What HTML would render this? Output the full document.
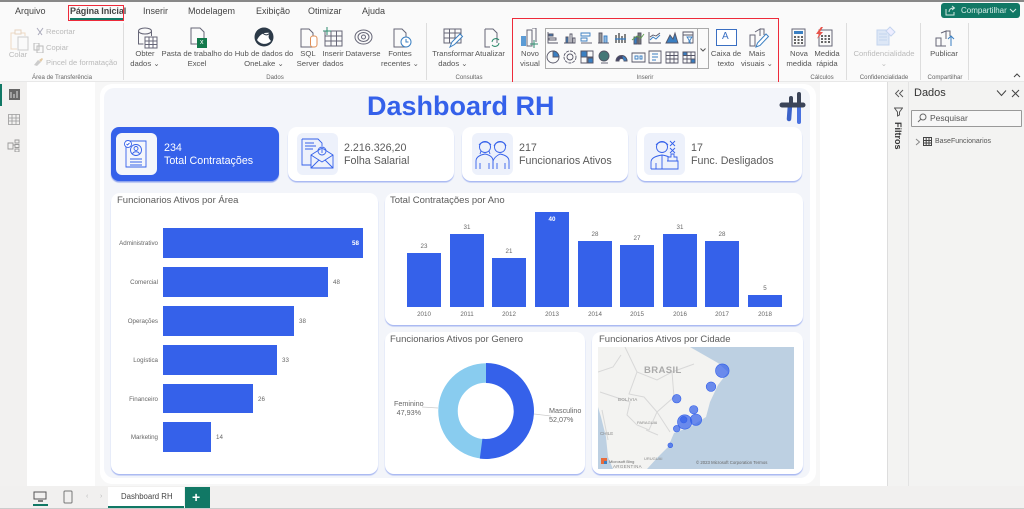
<!DOCTYPE html>
<html lang="pt"><head><meta charset="utf-8"><title>Dashboard RH</title>
<style>
html,body{margin:0;padding:0;background:#fff}
#p{position:relative;width:1024px;height:509px;overflow:hidden;background:#fff;font-family:"Liberation Sans",sans-serif;color:#444;filter:blur(.3px)}
#p div,#p svg{position:absolute}
.t{white-space:nowrap;line-height:1}
.c{text-align:center;transform:translateX(-50%);white-space:nowrap;font-size:7.7px;line-height:10px;color:#555}
.m{font-size:9px;color:#444;top:6px;line-height:11px;white-space:nowrap}
.g{font-size:6.1px;color:#666;text-align:center;transform:translateX(-50%);top:74px;white-space:nowrap;line-height:8px}
.sep{top:23px;width:1px;height:57px;background:#ddd}
.card{background:#fff;border-radius:9px;box-shadow:0 1.5px 1px #a9b9f2}
.ct{font-size:9.5px;color:#5b5b5b;white-space:nowrap;line-height:11px}
.b{background:#3561ea}
.kt{font-size:10.7px;line-height:13px;color:#5a5a5a;white-space:nowrap}
.tile{background:#edf1fb;border-radius:6px;width:41px;height:42px;top:133px}
.l{font-size:6.2px;color:#666;line-height:7px;white-space:nowrap}
.lr{text-align:right}
.lc{text-align:center;transform:translateX(-50%)}
svg.i{fill:none;stroke:#667;stroke-width:1}
</style></head><body><div id="p">

<!-- ribbon -->
<div style="left:0;top:0;width:1024px;height:82px;background:#fafafa"></div>
<div style="left:0;top:0;width:1024px;height:1.5px;background:#888"></div>
<div style="left:0;top:81px;width:1024px;height:1px;background:#e8e8e8"></div>
<div class="m" style="left:15px">Arquivo</div>
<div class="m" style="left:70px;font-weight:bold;color:#444;letter-spacing:-.1px">Página Inicial</div>
<div style="left:70px;top:18px;width:53px;height:1.5px;background:#117865"></div>
<div style="left:68px;top:5px;width:54px;height:14px;border:1.5px solid #ee2b3a"></div>
<div class="m" style="left:143px">Inserir</div>
<div class="m" style="left:188px">Modelagem</div>
<div class="m" style="left:256px">Exibição</div>
<div class="m" style="left:308px">Otimizar</div>
<div class="m" style="left:362px">Ajuda</div>

<div style="left:941px;top:3px;width:79px;height:15px;background:#117865;border-radius:3px"></div>
<svg style="left:945px;top:5px" width="11" height="11" viewBox="0 0 11 11" fill="none" stroke="#cfe6e0" stroke-width="1"><path d="M1 4v6h8V7M4 7c0-3 2-4 5-4M7 1l2.5 2L7 5"/></svg>
<div class="t" style="left:961px;top:7px;font-size:8px;color:#d8ece7">Compartilhar</div>
<svg style="left:1009px;top:8px" width="8" height="6" viewBox="0 0 8 6" fill="none" stroke="#d8ece7"><path d="M1 1l3 3 3-3"/></svg>

<!-- clipboard -->
<svg style="left:10px;top:28px" width="20" height="24" viewBox="0 0 20 24" fill="none" stroke-width="1"><path d="M5 5H1v16h6M11 5h4v3" stroke="#eed9c4"/><path d="M5 2h6v4H5z" stroke="#e5d3bf"/><rect x="8" y="9" width="10" height="13" stroke="#ccc"/></svg>
<div class="c" style="left:18px;top:50px;color:#bbb">Colar</div>
<svg style="left:35px;top:27px" width="10" height="10" viewBox="0 0 10 10" fill="none" stroke="#aab"><path d="M2 1l5 7M8 1L3 8"/></svg>
<div class="t" style="left:46px;top:28px;font-size:7.6px;color:#bbb">Recortar</div>
<svg style="left:33px;top:43px" width="11" height="10" viewBox="0 0 11 10" fill="none" stroke="#bbb"><path d="M1 0h5v7H1zM4 3h6v7H4z"/></svg>
<div class="t" style="left:46px;top:44px;font-size:7.6px;color:#bbb">Copiar</div>
<svg style="left:33px;top:57px" width="11" height="10" viewBox="0 0 11 10"><path d="M1 8l4-5 3 2-4 4z" fill="#ccc"/><path d="M6 3l3-2 1 1-2 3z" fill="#e3c9a3"/></svg>
<div class="t" style="left:46px;top:59px;font-size:7.6px;color:#bbb">Pincel de formatação</div>
<div class="g" style="left:62px">Área de Transferência</div>
<div class="sep" style="left:123px"></div>

<!-- dados -->
<svg class="i" style="left:137px;top:27px" width="21" height="22" viewBox="0 0 21 22"><ellipse cx="8" cy="4" rx="6.5" ry="3"/><path d="M1.5 4v13h5"/><path d="M14.5 4v5"/><rect x="8" y="10" width="12" height="11" fill="#fff"/><path d="M8 14h12M8 17.5h12M12 10v11M16 10v11"/></svg>
<div class="c" style="left:145px;top:49px">Obter<br>dados ⌄</div>
<svg class="i" style="left:189px;top:27px" width="20" height="22" viewBox="0 0 20 22"><path d="M2 1h9l4 4v12H2z"/><rect x="8" y="11" width="10" height="10" fill="#137a4c" stroke="none"/></svg>
<div class="t" style="left:200px;top:39px;font-size:7px;color:#fff">x</div>
<div class="c" style="left:197px;top:49px">Pasta de trabalho do<br>Excel</div>
<svg style="left:254px;top:27px" width="20" height="20" viewBox="0 0 20 20"><circle cx="10" cy="10" r="9.5" fill="#2c3a48"/><path d="M3 13c3-6 7-8 13-7-2 3-2 5 1 8-4 4-10 4-14-1z" fill="#fff"/><path d="M8 5c2 3 5 4 8 1" fill="none" stroke="#2c3a48"/></svg>
<div class="c" style="left:264px;top:49px">Hub de dados do<br>OneLake ⌄</div>
<svg class="i" style="left:300px;top:28px" width="18" height="20" viewBox="0 0 18 20"><path d="M1 1h8l4 4v14H1z"/><rect x="10.5" y="8" width="6.5" height="11" rx="2.5" fill="#fff" stroke="#e08e55"/></svg>
<div class="c" style="left:308px;top:49px">SQL<br>Server</div>
<svg class="i" style="left:323px;top:27px" width="20" height="20" viewBox="0 0 20 20"><path d="M2 4h17v15H2zM2 9h17M2 14h17M8 4v15M13.5 4v15"/><path d="M4 0v8M0 4h8" stroke="#2e8b6d"/></svg>
<div class="c" style="left:333px;top:49px">Inserir<br>dados</div>
<svg class="i" style="left:354px;top:29px" width="19" height="16" viewBox="0 0 19 16"><ellipse cx="9.5" cy="8" rx="8.5" ry="7"/><ellipse cx="9.5" cy="8" rx="5.5" ry="4.5"/><circle cx="9.5" cy="8" r="2"/></svg>
<div class="c" style="left:363px;top:49px">Dataverse</div>
<svg class="i" style="left:392px;top:28px" width="20" height="21" viewBox="0 0 20 21"><path d="M2 1h8l4 4v14H2z"/><circle cx="14" cy="14" r="5" fill="#fff" stroke="#3a7fc2"/><path d="M14 11v3h2.5" stroke="#3a7fc2"/></svg>
<div class="c" style="left:400px;top:49px">Fontes<br>recentes ⌄</div>
<div class="g" style="left:275px">Dados</div>
<div class="sep" style="left:426px"></div>

<!-- consultas -->
<svg class="i" style="left:443px;top:28px" width="21" height="20" viewBox="0 0 21 20"><path d="M1 1h17v14H1zM1 5h17M1 10h17M6.5 1v14M12 1v14"/><path d="M7 19l2-5 8-8 2.5 2.5-8 8z" fill="#fff" stroke="#3a7fc2"/></svg>
<div class="c" style="left:453px;top:49px">Transformar<br>dados ⌄</div>
<svg class="i" style="left:483px;top:28px" width="18" height="20" viewBox="0 0 18 20"><path d="M2 1h8l4 4v10M2 1v18h5"/><path d="M9 14a4 4 0 0 1 7-2M16 15a4 4 0 0 1-7 2" stroke="#2e8b6d"/></svg>
<div class="c" style="left:490px;top:49px">Atualizar</div>
<div class="g" style="left:469px">Consultas</div>

<!-- inserir -->
<div style="left:511.5px;top:17.5px;width:265px;height:63px;border:1.5px solid #ee2b3a"></div>
<svg class="i" style="left:520px;top:28px" width="20" height="20" viewBox="0 0 20 20"><rect x="1" y="8" width="5" height="10" fill="#5b9bd5" stroke="none"/><path d="M7 2h5v16H7zM12 0h4v14"/><path d="M14 12v8M10 16h8" stroke="#2e8b6d"/></svg>
<div class="c" style="left:530px;top:49px">Novo<br>visual</div>
<div style="left:545px;top:28px;width:162px;height:39px;border:1px solid #aaa;background:#fafafa"></div>
<div style="left:697px;top:28px;width:1px;height:40px;background:#aaa"></div>
<svg style="left:699px;top:47px" width="8" height="6" viewBox="0 0 8 6" fill="none" stroke="#555"><path d="M1.5 1.5L4 4l2.5-2.5"/></svg>
<svg style="left:546px;top:31px" width="151" height="34" viewBox="0 0 151 34" fill="none" stroke="#556" stroke-width=".9">
<g><path d="M2 1v11h10M3 3h4v2H3zM3 7h7v2H3z"/><path d="M3 3h4v2H3z" fill="#3a7fc2"/></g>
<g transform="translate(17)"><path d="M1 12h11M3 6h2v6H3zM7 3h2v9H7zM10 7h2v5h-2z"/><path d="M3 6h2v6H3z" fill="#3a7fc2"/></g>
<g transform="translate(34)"><path d="M1 2h9v3H1zM1 7h6v3H1z" stroke="#3a7fc2"/><path d="M1 12h11"/></g>
<g transform="translate(51)"><path d="M2 2h3v10H2z" fill="#999"/><path d="M7 5h3v7H7z" stroke="#3a7fc2" fill="#8fb8e0"/><path d="M1 12h11"/></g>
<g transform="translate(68)" stroke-width="1.3"><path d="M2 4v8M5 2v10M8 5v7M11 3v9" stroke="#444"/><path d="M1 8h11" stroke="#3a7fc2"/></g>
<g transform="translate(85)"><path d="M3 6h3v7H3z" fill="#3a7fc2"/><path d="M7 2h3v11H7z" fill="#777"/><path d="M1 9l5-4 4 2 3-4" stroke="#5fa04e"/></g>
<g transform="translate(102)"><path d="M1 1v11h12"/><path d="M2 9l3-3 3 2 4-4" stroke="#3a7fc2"/><path d="M2 6l3-2 3 1 4-3"/></g>
<g transform="translate(119)"><path d="M1 12l4-8 3 4 2-6 3 10z" fill="#3a7fc2"/></g>
<g transform="translate(136)"><path d="M1 1h10v11H1zM1 4h10"/><path d="M5 6h5l-2 3v3l-1-1V9z" stroke="#3a7fc2"/></g>
<g transform="translate(0,19)"><circle cx="7" cy="7" r="6"/><path d="M7 1a6 6 0 0 1 6 6H7z" fill="#3a7fc2"/></g>
<g transform="translate(17,19)"><circle cx="7" cy="7" r="6" stroke-dasharray="3 1"/><circle cx="7" cy="7" r="3"/></g>
<g transform="translate(34,19)"><path d="M1 1h12v12H1z"/><path d="M1 1h6v6H1zM8 8h5v5H8z" fill="#3a7fc2"/><path d="M1 7h12M7 1v12"/></g>
<g transform="translate(51,19)"><circle cx="7" cy="6" r="5" fill="#477"/><path d="M4 13h7"/></g>
<g transform="translate(68,19)"><path d="M2 11a5.5 5.5 0 0 1 11 0h-3a2.5 2.5 0 0 0-5 0z" fill="#446"/><path d="M8 5.5a5.5 5.5 0 0 1 5 5.5h-3" fill="#3a7fc2"/></g>
<g transform="translate(85,19)"><path d="M1 3h13v9H1z"/><path d="M4 6h3v3H4zM9 6h2v3H9z" stroke="#3a7fc2"/></g>
<g transform="translate(102,19)"><path d="M1 1h12v12H1z"/><path d="M4 4h6M4 7h6M4 10h4" stroke="#3a7fc2"/></g>
<g transform="translate(119,19)"><path d="M1 2h12v11H1zM1 5.5h12M1 9h12M5 2v11M9 2v11"/></g>
<g transform="translate(136,19)"><path d="M1 2h12v11H1z"/><path d="M1 5.5h12M1 9h12M5 2v11M9 2v11"/><path d="M9 9h4v4H9zM1 2h4v3.5H1z" fill="#3a7fc2"/></g>
</svg>
<div style="left:716px;top:29px;width:19px;height:15px;border:1px solid #3a6fc2;background:#fff"></div>
<div class="t" style="left:722px;top:32px;font-size:10px;color:#3a6fc2">A</div>
<div class="c" style="left:726px;top:49px">Caixa de<br>texto</div>
<svg class="i" style="left:749px;top:27px" width="21" height="21" viewBox="0 0 21 21"><path d="M1 8h5v11H1zM6 5l5-3v7M11 2h4v6"/><path d="M7 20l1.5-4L17 7l2.5 2.5-8.500 9z" fill="#fff" stroke="#3a7fc2"/></svg>
<div class="c" style="left:757px;top:49px">Mais<br>visuais ⌄</div>
<div class="g" style="left:645px">Inserir</div>

<!-- calculos -->
<svg class="i" style="left:791px;top:28px" width="15" height="19" viewBox="0 0 15 19"><rect x="1" y="1" width="13" height="17"/><rect x="3" y="3" width="9" height="3" fill="#3a7fc2" stroke="none"/><path d="M3 9h2M6.5 9h2M10 9h2M3 12h2M6.5 12h2M10 12h2M3 15h2M6.5 15h2M10 15h2" stroke="#333" stroke-width="1.5"/></svg>
<div class="c" style="left:799px;top:49px">Nova<br>medida</div>
<svg class="i" style="left:815px;top:27px" width="18" height="20" viewBox="0 0 18 20"><rect x="4" y="3" width="13" height="16"/><path d="M6 9h2M9.5 9h2M13 9h2M6 12h2M9.5 12h2M13 12h2M6 15h2M9.5 15h2M13 15h2" stroke="#333" stroke-width="1.5"/><path d="M6 0L1 7h3l-2 5 6-7H5l3-5z" fill="#e8534a" stroke="none"/></svg>
<div class="c" style="left:827px;top:49px">Medida<br>rápida</div>
<div class="g" style="left:822px">Cálculos</div>
<div class="sep" style="left:846px"></div>

<svg style="left:876px;top:26px" width="20" height="21" viewBox="0 0 20 21" fill="none" stroke="#c4d4ee"><path d="M1 4h12v15H1z" fill="#dde7f6"/><path d="M3 8h8M3 11h8M3 14h8"/><path d="M10 5l4-4 5 5-4 4z" fill="#eef"/></svg>
<div class="c" style="left:884px;top:49px;color:#bbb">Confidencialidade<br>⌄</div>
<div class="g" style="left:884px">Confidencialidade</div>
<div class="sep" style="left:920px"></div>

<svg class="i" style="left:935px;top:27px" width="21" height="20" viewBox="0 0 21 20"><path d="M1 11h5v8H1zM6 6l5-2v8M6 19h5M11 4h4v5"/><path d="M16 19V9M13 12l3-3 3 3" stroke="#3a7fc2"/></svg>
<div class="c" style="left:944px;top:49px">Publicar</div>
<div class="g" style="left:945px">Compartilhar</div>
<div class="sep" style="left:968px"></div>
<svg style="left:1013px;top:73px" width="8" height="6" viewBox="0 0 8 6" fill="none" stroke="#444"><path d="M1 4l3-3 3 3"/></svg>

<!-- left rail -->
<div style="left:0;top:82px;width:27px;height:404px;background:#f2f1f0"></div>
<div style="left:0;top:84px;width:2px;height:22px;background:#117865"></div>
<svg style="left:9px;top:89px" width="11" height="11" viewBox="0 0 11 11"><rect width="11" height="11" fill="#666"/><path d="M2 3v6M5 5v4M8 2v7" stroke="#ddd"/></svg>
<svg style="left:8px;top:114px" width="12" height="11" viewBox="0 0 12 11" fill="none" stroke="#999" stroke-width=".8"><path d="M.5.5h11v10H.5zM.5 4h11M.5 7h11M4 .5v10M8 .5v10"/></svg>
<svg style="left:7px;top:139px" width="13" height="13" viewBox="0 0 13 13" fill="none" stroke="#999" stroke-width=".9"><path d="M1 4h5v6H1zM8 1h4v3H8zM8 5.5h4v3H8zM8 10h4v3H8zM6 6h2"/></svg>

<!-- canvas gutter -->
<div style="left:95px;top:82px;width:725px;height:404px;background:#f7f7f7"></div>
<div style="left:100px;top:84px;width:716px;height:400px;background:#fff;border-radius:12px"></div>
<div style="left:104px;top:88px;width:706px;height:390px;background:#f3f5fa;border-radius:10px"></div>

<div class="t" style="left:367px;top:93px;font-size:27px;font-weight:bold;color:#3561ea">Dashboard RH</div>
<!-- logo -->
<svg style="left:778px;top:91px" width="28" height="34" viewBox="0 0 28 34"><path d="M12 14L11 28" stroke="#3b62c8" stroke-width="4.5" stroke-linecap="round"/><path d="M21 14v17" stroke="#4a72e0" stroke-width="4" stroke-linecap="round"/><path d="M4 14h21" stroke="#3b4458" stroke-width="5" stroke-linecap="round"/><path d="M13 14V7M21 14V3" stroke="#3b4458" stroke-width="4" stroke-linecap="round"/></svg>

<!-- KPI -->
<div class="b" style="left:111px;top:127px;width:168px;height:54px;border-radius:8px;box-shadow:0 1.5px 1px #8ea3ee"></div>
<div class="tile" style="left:116px;background:#f4f6fb"></div>
<svg style="left:123px;top:139px" width="27" height="30" viewBox="0 0 27 30" fill="none" stroke="#3561ea" stroke-width=".9"><path d="M3 2h20v26H3z"/><circle cx="13" cy="11" r="5.5"/><circle cx="13" cy="9.5" r="2"/><path d="M9.5 15c1-3 6-3 7 0"/><circle cx="5" cy="5" r="3.5" fill="#fff"/><path d="M3.5 5l1 1 2-2"/><path d="M7 20h12M7 23h12M7 26h12"/></svg>
<div class="kt" style="left:164px;top:142px;color:#fff">234<br>Total Contratações</div>

<div class="card" style="left:288px;top:127px;width:166px;height:54px"></div>
<div class="tile" style="left:297px"></div>
<svg style="left:301px;top:138px" width="33" height="31" viewBox="0 0 33 31" fill="none" stroke="#3561ea" stroke-width=".9"><path d="M1 1h16l4 4v3M1 1v26h9"/><path d="M4 5h9M4 8h11M4 11h8"/><path d="M10 17l11-7 11 7v13H10z"/><path d="M10 17l11 7 11-7M10 30l8-8M32 30l-8-8"/><circle cx="21" cy="13" r="4"/><path d="M21 11v4"/></svg>
<div class="kt" style="left:344px;top:142px">2.216.326,20<br>Folha Salarial</div>

<div class="card" style="left:462px;top:127px;width:166px;height:54px"></div>
<div class="tile" style="left:472px"></div>
<svg style="left:475px;top:139px" width="35" height="31" viewBox="0 0 35 31" fill="none" stroke="#3561ea" stroke-width=".9"><circle cx="10" cy="8" r="5.5"/><path d="M4 6c3-4 9-4 12 0M6 12l-1 3M14 12l1 3"/><path d="M1 30v-8c0-4 4-6 9-7 5 1 8 3 8 7v8M5 24v6M14 24v6"/><circle cx="25" cy="8" r="5.5"/><path d="M19 7c2-5 10-6 12 0"/><path d="M18 30v-8c1-3 3-5 7-7 5 1 9 3 9 7v8M22 24v6M30 24v6"/></svg>
<div class="kt" style="left:519px;top:142px">217<br>Funcionarios Ativos</div>

<div class="card" style="left:637px;top:127px;width:165px;height:54px"></div>
<div class="tile" style="left:644px"></div>
<svg style="left:650px;top:139px" width="29" height="31" viewBox="0 0 29 31" fill="none" stroke="#3561ea" stroke-width=".9"><circle cx="12" cy="8" r="5.5"/><path d="M6 6c3-4 9-4 12 0"/><path d="M1 30v-7c0-4 5-6 11-7 3 .5 5 1 7 2M1 30h27v-8H17M6 24v6M12 16v14"/><path d="M20 2l5 5M25 2l-5 5M20 9l5 5M25 9l-5 5"/><path d="M18 22v-4h3v-3h3v3h3v4"/></svg>
<div class="kt" style="left:691px;top:142px">17<br>Func. Desligados</div>

<!-- area card -->
<div class="card" style="left:111px;top:193px;width:267px;height:281px"></div>
<div class="ct" style="left:117px;top:195px">Funcionarios Ativos por Área</div>
<div class="b" style="left:163px;top:228px;width:200px;height:30px"></div>
<div class="b" style="left:163px;top:267px;width:165px;height:30px"></div>
<div class="b" style="left:163px;top:306px;width:131px;height:30px"></div>
<div class="b" style="left:163px;top:345px;width:114px;height:30px"></div>
<div class="b" style="left:163px;top:384px;width:90px;height:29px"></div>
<div class="b" style="left:163px;top:422px;width:48px;height:30px"></div>
<div class="l lr" style="right:866px;top:240px">Administrativo</div>
<div class="l lr" style="right:866px;top:279px">Comercial</div>
<div class="l lr" style="right:866px;top:318px">Operações</div>
<div class="l lr" style="right:866px;top:357px">Logística</div>
<div class="l lr" style="right:866px;top:396px">Financeiro</div>
<div class="l lr" style="right:866px;top:434px">Marketing</div>
<div class="l" style="left:352px;top:240px;color:#fff;font-weight:bold">58</div>
<div class="l" style="left:333px;top:279px">48</div>
<div class="l" style="left:299px;top:318px">38</div>
<div class="l" style="left:282px;top:357px">33</div>
<div class="l" style="left:258px;top:396px">26</div>
<div class="l" style="left:216px;top:434px">14</div>

<!-- column card -->
<div class="card" style="left:385px;top:193px;width:418px;height:132px"></div>
<div class="ct" style="left:390px;top:195px">Total Contratações por Ano</div>
<div class="b" style="left:407px;top:253px;width:34px;height:54px"></div>
<div class="b" style="left:450px;top:234px;width:34px;height:73px"></div>
<div class="b" style="left:492px;top:258px;width:34px;height:49px"></div>
<div class="b" style="left:535px;top:212px;width:34px;height:95px"></div>
<div class="b" style="left:578px;top:241px;width:34px;height:66px"></div>
<div class="b" style="left:620px;top:245px;width:34px;height:62px"></div>
<div class="b" style="left:663px;top:234px;width:34px;height:73px"></div>
<div class="b" style="left:705px;top:241px;width:34px;height:66px"></div>
<div class="b" style="left:748px;top:295px;width:34px;height:12px"></div>
<div class="l lc" style="left:424px;top:243px">23</div>
<div class="l lc" style="left:467px;top:224px">31</div>
<div class="l lc" style="left:509px;top:248px">21</div>
<div class="l lc" style="left:552px;top:216px;color:#fff;font-weight:bold">40</div>
<div class="l lc" style="left:595px;top:231px">28</div>
<div class="l lc" style="left:637px;top:235px">27</div>
<div class="l lc" style="left:680px;top:224px">31</div>
<div class="l lc" style="left:722px;top:231px">28</div>
<div class="l lc" style="left:765px;top:285px">5</div>
<div class="l lc" style="left:424px;top:311px">2010</div>
<div class="l lc" style="left:467px;top:311px">2011</div>
<div class="l lc" style="left:509px;top:311px">2012</div>
<div class="l lc" style="left:552px;top:311px">2013</div>
<div class="l lc" style="left:595px;top:311px">2014</div>
<div class="l lc" style="left:637px;top:311px">2015</div>
<div class="l lc" style="left:680px;top:311px">2016</div>
<div class="l lc" style="left:722px;top:311px">2017</div>
<div class="l lc" style="left:765px;top:311px">2018</div>

<!-- gender card -->
<div class="card" style="left:385px;top:332px;width:200px;height:142px"></div>
<div class="ct" style="left:390px;top:334px">Funcionarios Ativos por Genero</div>
<svg style="left:385px;top:360px" width="200" height="100" viewBox="385 360 200 100">
<circle cx="486" cy="411" r="38" fill="none" stroke="#89ccef" stroke-width="19.5"/>
<path d="M486 363A48 48 0 1 1 479.8 458.6L482.4 438.8A28 28 0 1 0 486 383Z" fill="#3561ea"/>
<path d="M534 414l17 2M438 408l-16-1" stroke="#ccc" stroke-width=".8" fill="none"/>
</svg>
<div class="l" style="left:394px;top:400px;font-size:7.2px;line-height:8.5px;text-align:center">Feminino<br>47,93%</div>
<div class="l" style="left:549px;top:407px;font-size:7.2px;line-height:8.5px">Masculino<br>52,07%</div>

<!-- city card -->
<div class="card" style="left:592px;top:332px;width:211px;height:142px"></div>
<div class="ct" style="left:599px;top:334px">Funcionarios Ativos por Cidade</div>
<svg style="left:598px;top:347px" width="196" height="122" viewBox="598 347 196 122">
<rect x="598" y="347" width="196" height="122" fill="#bdd0e2"/>
<path d="M598 347H690L718 363L728 372L718 385L710 402L706 417L690 427L674 433L668 447L658 457L647 469H613L608 457L606 437L601 417L598 407Z" fill="#f3f3f1"/>
<path d="M598 372l15-5 8-12M625 347l12 25 20 8 15-8 22-8M672 372l2 25-17 15 13 20M637 372l-8 22 15 3 13 15-8 18-12-5-10-10 3-13-15-5-15-5M646 430l12 5M602 410l6 30" fill="none" stroke="#d8d8d8" stroke-width="1"/>
<text x="644" y="373" font-size="9.5" font-weight="bold" fill="#aaa" font-family="Liberation Sans,sans-serif" letter-spacing=".4">BRASIL</text>
<text x="618" y="401" font-size="4.5" fill="#888" font-family="Liberation Sans,sans-serif" letter-spacing=".3">BOLÍVIA</text>
<text x="637" y="424" font-size="4" fill="#888" font-family="Liberation Sans,sans-serif">PARAGUAI</text>
<text x="600" y="435" font-size="4.5" fill="#888" font-family="Liberation Sans,sans-serif">CHILE</text>
<text x="644" y="460" font-size="4" fill="#888" font-family="Liberation Sans,sans-serif">URUGUAI</text>
<text x="613" y="468" font-size="4.5" fill="#888" font-family="Liberation Sans,sans-serif" letter-spacing=".3">ARGENTINA</text>
<text x="609" y="463" font-size="4" fill="#666" font-family="Liberation Sans,sans-serif">Microsoft Bing</text>
<text x="696" y="464" font-size="4.3" fill="#666" font-family="Liberation Sans,sans-serif">© 2023 Microsoft Corporation  Termos</text>
<rect x="601" y="458" width="6" height="6" fill="#e66b3c"/><rect x="604" y="461" width="3" height="3" fill="#3a7fc2"/>
<g fill="#3561ea" fill-opacity=".72" stroke="#3561ea" stroke-width=".6">
<circle cx="722.3" cy="370.7" r="6.8"/><circle cx="711" cy="386.7" r="4.8"/><circle cx="676.7" cy="398.7" r="4.3"/><circle cx="693.7" cy="409.7" r="4.2"/><circle cx="696" cy="419.7" r="5.7"/><circle cx="684.7" cy="422" r="7.2"/><circle cx="683.7" cy="419.7" r="3.3"/><circle cx="676.7" cy="428.7" r="3.3"/><circle cx="670.3" cy="445.3" r="2.4"/>
</g></svg>

<!-- filtros pane -->
<div style="left:887px;top:82px;width:137px;height:404px;background:#f3f3f2"></div>
<div style="left:887px;top:82px;width:1px;height:404px;background:#ddd"></div>
<div style="left:908px;top:82px;width:1px;height:404px;background:#e3e3e3"></div>
<svg style="left:894px;top:89px" width="10" height="9" viewBox="0 0 10 9" fill="none" stroke="#555" stroke-width=".9"><path d="M5 1L1.5 4.5 5 8M9 1L5.5 4.5 9 8"/></svg>
<svg style="left:894px;top:107px" width="9" height="10" viewBox="0 0 9 10" fill="none" stroke="#555"><path d="M.5 1h8L5.5 5v3l-2 1V5z"/></svg>
<div class="t" style="left:892px;top:122px;font-size:9px;font-weight:bold;color:#333;transform:rotate(90deg) translate(0,-9px);transform-origin:0 0;width:30px;margin-left:1px">Filtros</div>
<div class="t" style="left:914px;top:88px;font-size:11px;color:#333">Dados</div>
<svg style="left:996px;top:89px" width="24" height="9" viewBox="0 0 24 9" fill="none" stroke="#444"><path d="M1 1.5l4.5 5 4.500-5M16 1l7 7M23 1l-7 7"/></svg>
<div style="left:911px;top:110px;width:109px;height:15px;border:1px solid #999;background:#f7f7f7;border-radius:1px"></div>
<svg style="left:917px;top:113px" width="10" height="10" viewBox="0 0 10 10" fill="none" stroke="#666"><circle cx="6" cy="4" r="3"/><path d="M4 6L1 9"/></svg>
<div class="t" style="left:930px;top:114px;font-size:8.5px;color:#555">Pesquisar</div>
<svg style="left:915px;top:138px" width="6" height="8" viewBox="0 0 6 8" fill="none" stroke="#888"><path d="M1 1l3.5 3L1 7"/></svg>
<svg style="left:923px;top:137px" width="9" height="9" viewBox="0 0 9 9" fill="none" stroke="#444"><path d="M.5.5h8v8h-8zM.5 3.500h8M.5 6h8M3.200.5v8M6 .5v8"/></svg>
<div class="t" style="left:935px;top:138px;font-size:7px;color:#555">BaseFuncionarios</div>

<!-- bottom tabs -->
<div style="left:0;top:486px;width:1024px;height:22px;background:#f1f0ef"></div>
<div style="left:0;top:508px;width:1024px;height:1px;background:#ccc"></div>
<svg style="left:33px;top:491px" width="15" height="12" viewBox="0 0 15 12" fill="none" stroke="#555"><path d="M1 1h12v7H1z"/><path d="M5 10h5" stroke-width="1.5"/></svg>
<div style="left:33px;top:504px;width:15px;height:1.5px;background:#117865"></div>
<svg style="left:63px;top:490px" width="11" height="14" viewBox="0 0 11 14" fill="none" stroke="#777"><rect x="1" y="1" width="8" height="12" rx="1"/></svg>
<div class="t" style="left:86px;top:493px;font-size:7px;color:#bbb">‹</div>
<div class="t" style="left:100px;top:493px;font-size:7px;color:#bbb">›</div>
<div style="left:108px;top:487px;width:76px;height:20px;background:#fff"></div>
<div style="left:108px;top:506px;width:76px;height:2px;background:#117865"></div>
<div class="t" style="left:121px;top:493px;font-size:7.8px;color:#444">Dashboard RH</div>
<div style="left:185px;top:487px;width:25px;height:21px;background:#117865"></div>
<div class="t" style="left:192px;top:490px;font-size:14px;font-weight:bold;color:#fff">+</div>
</div></body></html>
